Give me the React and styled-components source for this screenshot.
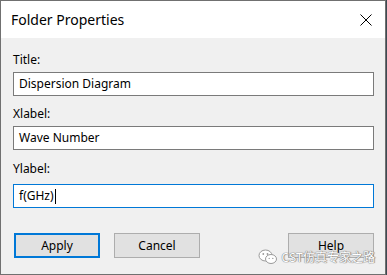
import React from "react";
import styled, { createGlobalStyle } from "styled-components";

const GlobalStyle = createGlobalStyle`
  html, body {
    margin: 0;
    padding: 0;
    background: #3d4a52;
  }
  body {
    font-family: "Segoe UI", "Noto Sans", "Liberation Sans", sans-serif;
  }
`;

function App() {
  return (
    <>
      <GlobalStyle />
      <Window>
        <TitleBar>
          <TitleText>Folder Properties</TitleText>
          <CloseButton>
            <svg width="12" height="12" viewBox="0 0 12 12">
              <path d="M0.5 0.5 L11.5 11.5 M11.5 0.5 L0.5 11.5" stroke="#000" strokeWidth="1" />
            </svg>
          </CloseButton>
        </TitleBar>
        <Body>
          <Label>Title:</Label>
          <TextBox>Dispersion Diagram</TextBox>
          <Label $gap={10}>Xlabel:</Label>
          <TextBox>Wave Number</TextBox>
          <Label $gap={11} $after={7}>Ylabel:</Label>
          <TextBox $focused>
            f(GHz)<Caret />
          </TextBox>
          <ButtonRow>
            <Button $default>Apply</Button>
            <Button>Cancel</Button>
            <Spacer />
            <Button>Help</Button>
          </ButtonRow>
        </Body>
        <Watermark>
          <svg width="20" height="16" viewBox="0 0 20 16">
            <ellipse cx="7.5" cy="6.5" rx="6.5" ry="5.5" fill="#fff" stroke="#9a9a9a" strokeWidth="1" />
            <ellipse cx="13" cy="10" rx="5.5" ry="4.5" fill="#fff" stroke="#9a9a9a" strokeWidth="1" />
            <circle cx="5.3" cy="5" r="0.9" fill="#9a9a9a" />
            <circle cx="9.5" cy="5" r="0.9" fill="#9a9a9a" />
            <circle cx="11.2" cy="9.4" r="0.7" fill="#9a9a9a" />
            <circle cx="14.8" cy="9.4" r="0.7" fill="#9a9a9a" />
          </svg>
          <WatermarkText>CST仿真专家之路</WatermarkText>
        </Watermark>
      </Window>
    </>
  );
}

const Window = styled.div`
  position: relative;
  width: 384px;
  height: 273px;
  border: 1px solid #707070;
  background: #f0f0f0;
  display: flex;
  flex-direction: column;
`;

const TitleBar = styled.div`
  height: 37px;
  background: #ffffff;
  display: flex;
  align-items: center;
  padding-left: 10px;
  padding-right: 13px;
`;

const TitleText = styled.div`
  flex: 1;
  font-size: 14px;
  color: #000;
  margin-top: -1px;
`;

const CloseButton = styled.div`
  width: 12px;
  height: 12px;
  display: flex;
`;

const Body = styled.div`
  flex: 1;
  display: flex;
  flex-direction: column;
  padding: 14px 11px 0 12px;
`;

const Label = styled.div`
  font-size: 12px;
  line-height: 16px;
  color: #000;
  margin-top: ${(p) => p.$gap || 0}px;
  margin-bottom: ${(p) => p.$after || 4}px;
`;

const TextBox = styled.div`
  height: 22px;
  border: 1px solid ${(p) => (p.$focused ? "#0078d7" : "#7a7a7a")};
  background: #fff;
  font-size: 12px;
  line-height: 22px;
  padding-left: 5px;
  color: #000;
  display: flex;
  align-items: center;
`;

const Caret = styled.span`
  display: inline-block;
  width: 1px;
  height: 15px;
  background: #000;
  margin-left: 1px;
`;

const ButtonRow = styled.div`
  display: flex;
  gap: 14px;
  margin-top: 25px;
  padding-left: 1px;
`;

const Spacer = styled.div`
  flex: 1;
`;

const Button = styled.div`
  box-sizing: border-box;
  width: 86px;
  height: 25px;
  background: #e1e1e1;
  border: ${(p) => (p.$default ? "2px solid #0078d7" : "1px solid #adadad")};
  font-size: 12px;
  color: #000;
  display: flex;
  align-items: center;
  justify-content: center;
`;

const Watermark = styled.div`
  position: absolute;
  right: 10px;
  bottom: 9px;
  display: flex;
  align-items: center;
  gap: 4px;
`;

const WatermarkText = styled.span`
  font-family: "Noto Sans CJK SC", sans-serif;
  font-size: 12px;
  line-height: 14px;
  color: #fff;
  text-shadow: 0 0 1px #777, 0 0 1px #777, 1px 0 1px #999;
`;

export default App;
